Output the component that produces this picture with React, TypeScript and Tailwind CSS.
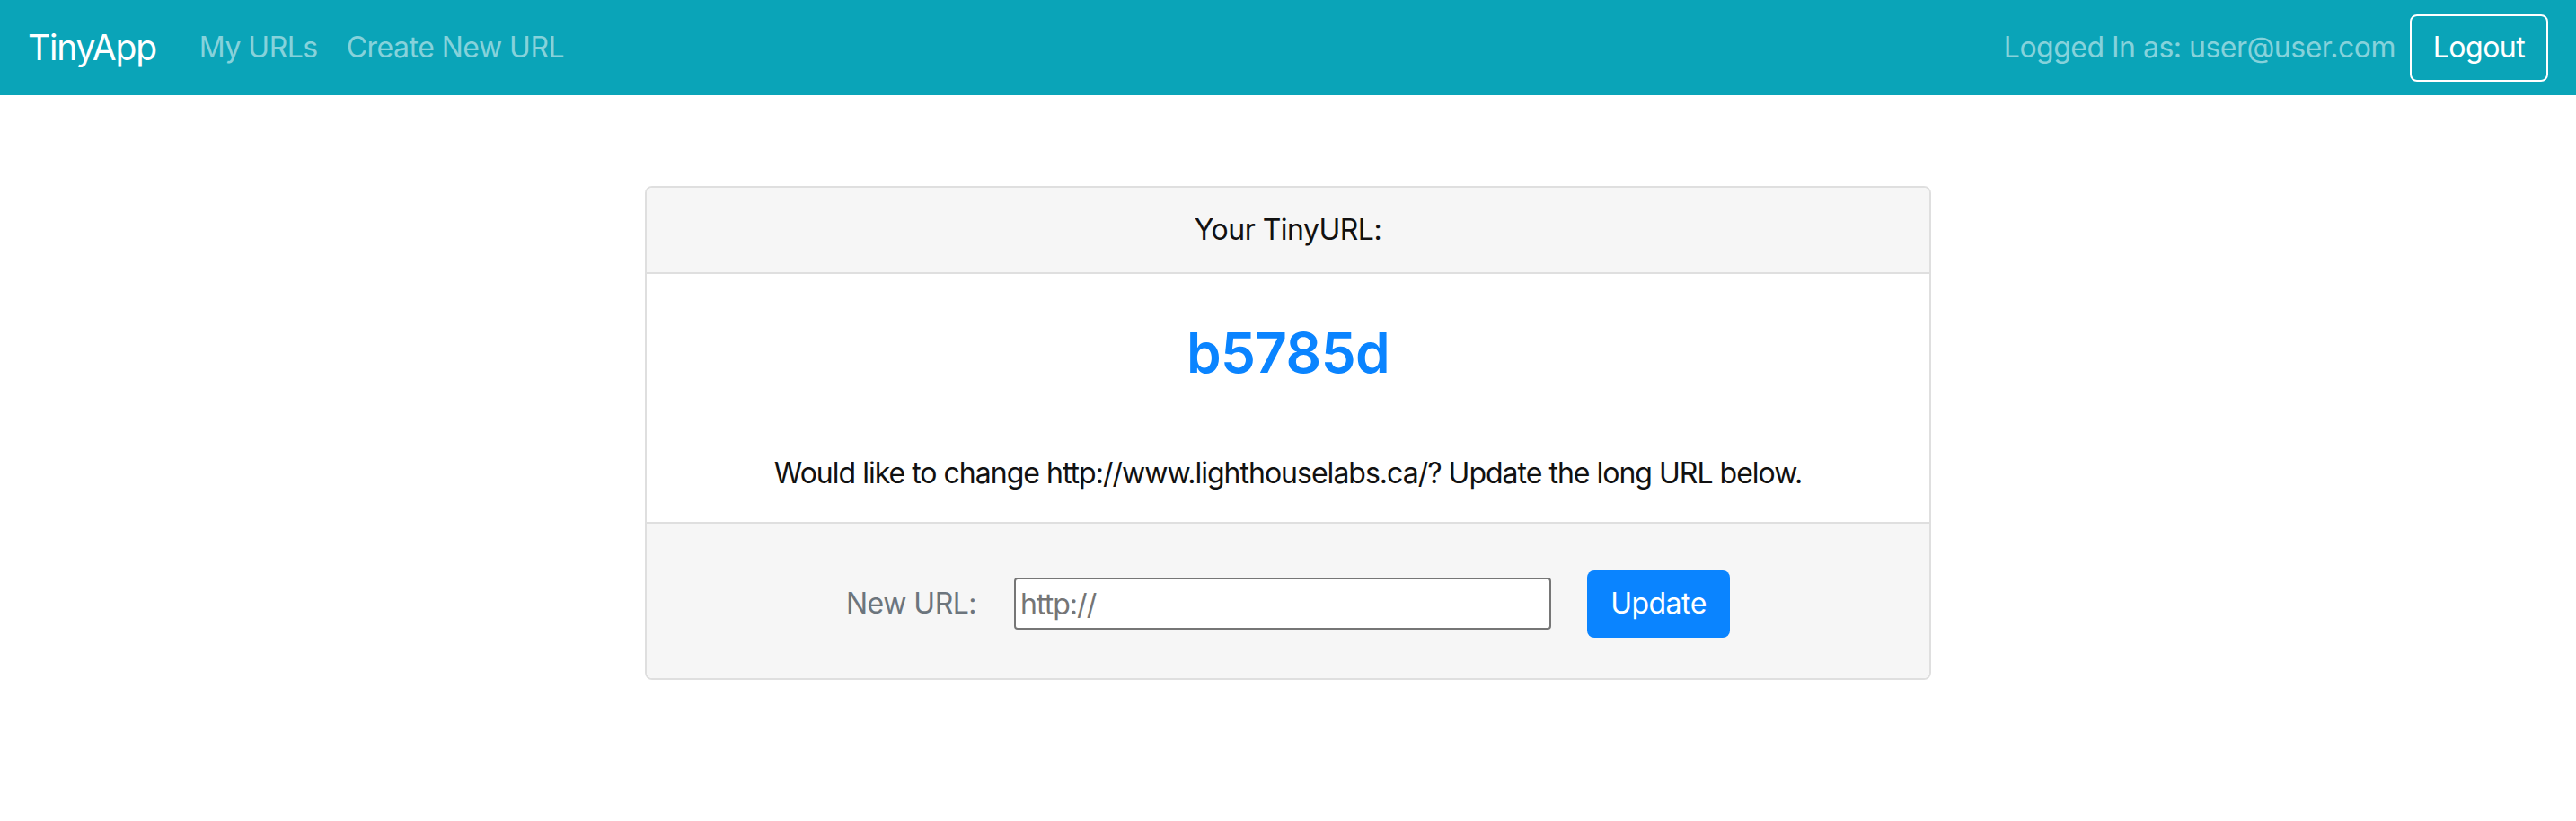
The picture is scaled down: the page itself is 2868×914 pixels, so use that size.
export default function App() {
  return (
    <div className="min-h-[914px] bg-white font-['Inter',sans-serif] tracking-[-0.032em] text-[#111]">
      {/* Navbar */}
      <nav className="flex h-[106px] items-center justify-between bg-[#0aa4b8] px-[31px]">
        <div className="flex items-center">
          <a className="mr-[32px] text-[39px] leading-[60px] tracking-[-0.03em] text-white">TinyApp</a>
          <a className="px-[16px] text-[32px] leading-[48px] text-[#86d2db]">My URLs</a>
          <a className="px-[16px] text-[32px] leading-[48px] text-[#86d2db]">Create New URL</a>
        </div>
        <div className="flex items-center">
          <span className="mr-[16px] text-[32px] leading-[48px] text-[#86d2db]">
            Logged In as: user@user.com
          </span>
          <button className="h-[75px] w-[154px] rounded-[8px] border-2 border-white text-[32px] leading-[48px] text-white">
            Logout
          </button>
        </div>
      </nav>

      {/* Card */}
      <div className="mx-auto mt-[101px] w-[1432px] overflow-hidden rounded-[8px] border-2 border-[#dfdfdf]">
        <div className="flex h-[96px] items-center justify-center border-b-2 border-[#dfdfdf] bg-[#f6f6f6] text-[32px]">
          Your TinyURL:
        </div>
        <div className="flex h-[276px] flex-col items-center bg-white">
          <h2 className="mt-[50px] text-[62px] font-semibold leading-[76px] tracking-[-0.01em] text-[#0a84ff]">b5785d</h2>
          <p className="mt-[72px] text-[32px] leading-[48px] tracking-[-0.031em]">
            Would like to change http://www.lighthouselabs.ca/? Update the long URL below.
          </p>
        </div>
        <div className="flex h-[174px] items-center justify-center border-t-2 border-[#dfdfdf] bg-[#f6f6f6] pt-[6px]">
          <label className="mr-[42px] text-[32px] leading-[48px] text-[#6c757d]">New URL:</label>
          <input
            className="h-[58px] w-[598px] rounded-[4px] border-2 border-[#767676] bg-white px-[5px] text-[32px] tracking-[-0.03em] placeholder:text-[#757575] outline-none"
            placeholder="http://"
          />
          <button className="ml-[40px] h-[75px] w-[159px] rounded-[8px] bg-[#0a84ff] text-[32px] leading-[48px] text-white">
            Update
          </button>
        </div>
      </div>
    </div>
  );
}
